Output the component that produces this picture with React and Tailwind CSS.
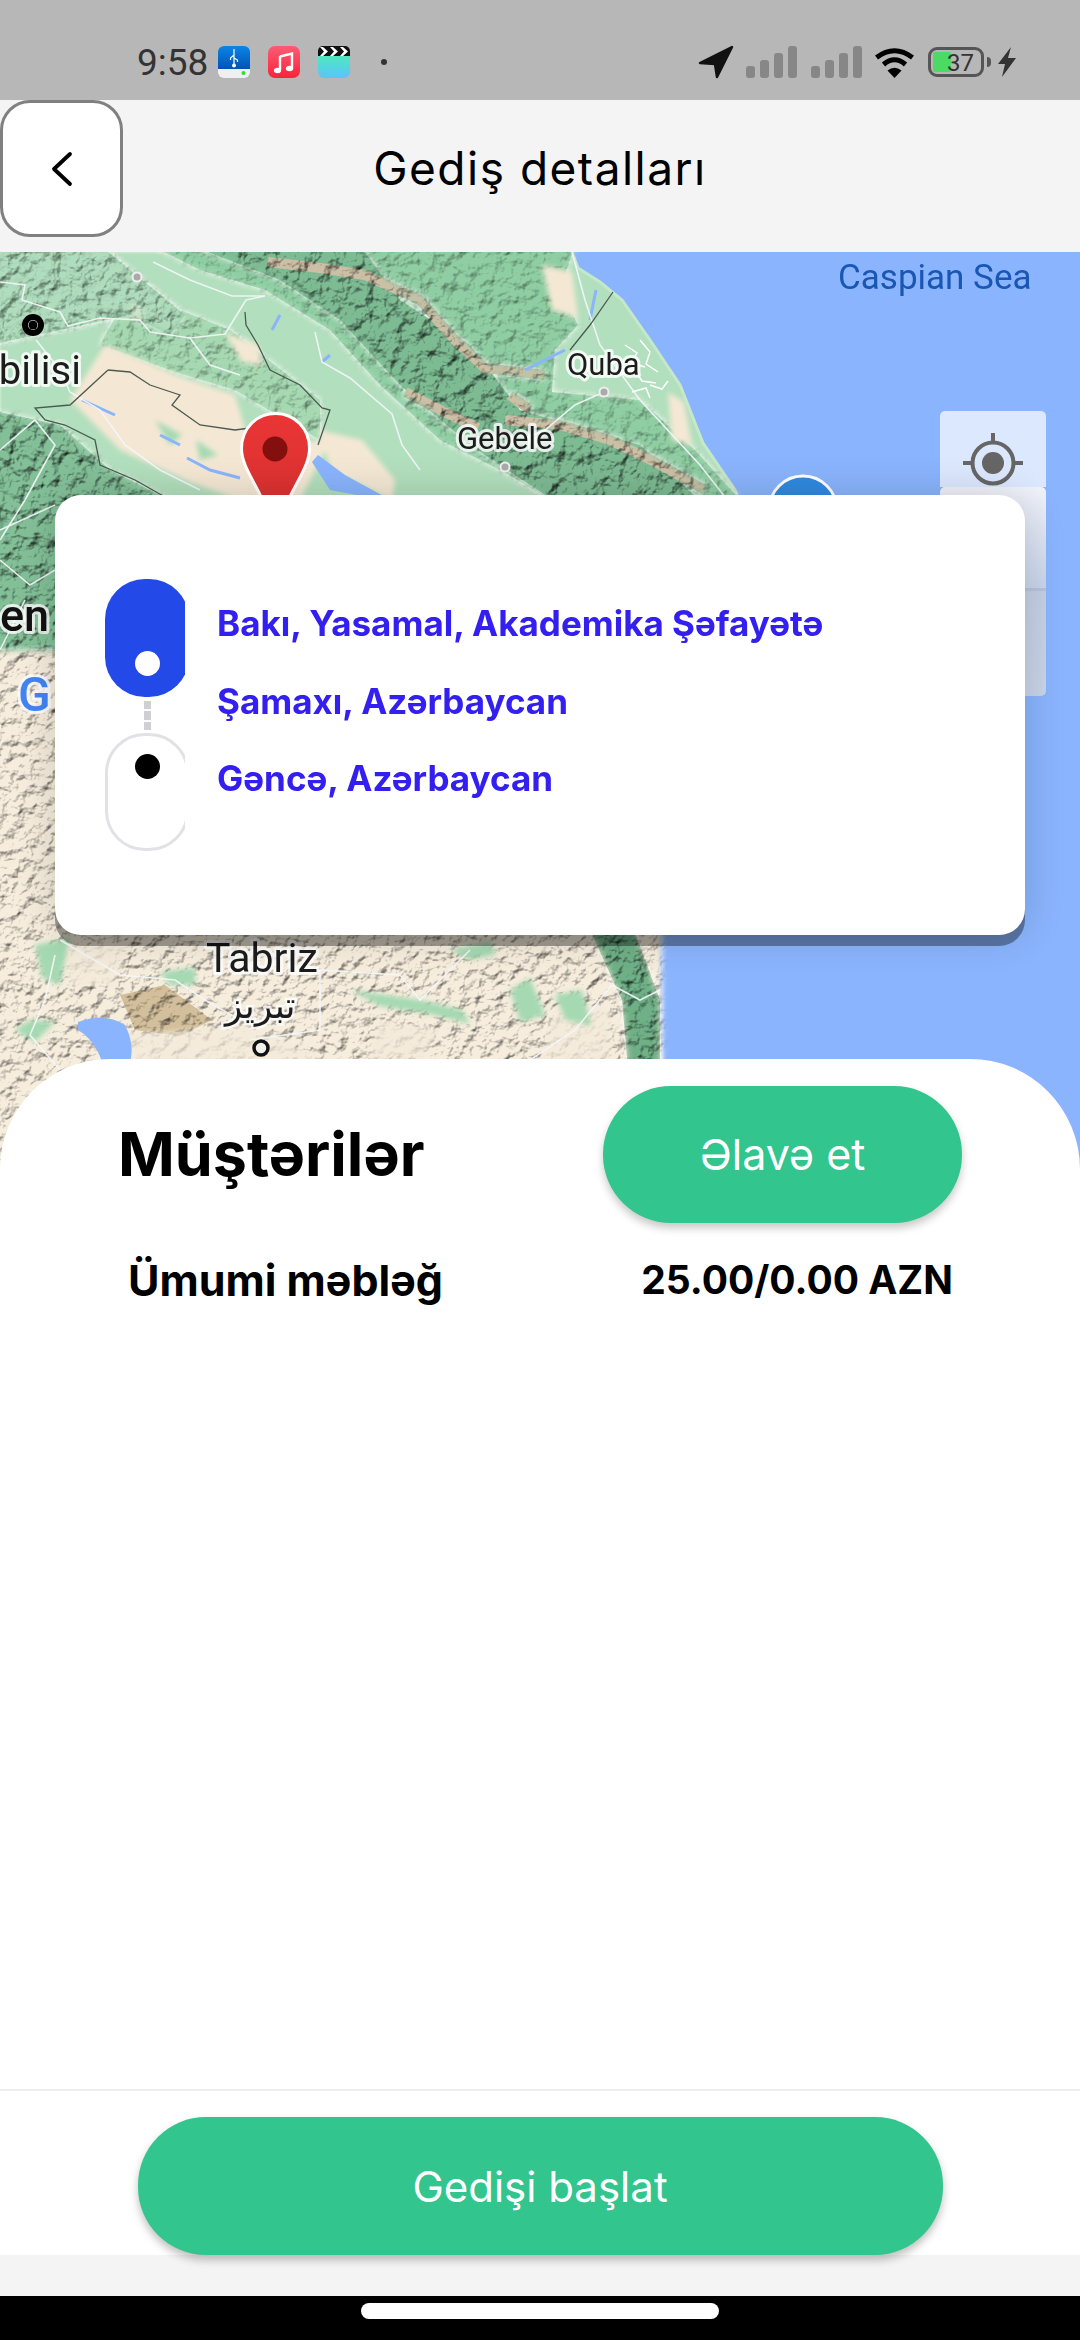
const pts = (poly) => poly.map((p) => p.join(",")).join(" ");

const LAND = [[0, 252], [572, 252], [578, 268], [600, 282], [622, 300], [650, 340], [680, 385], [703, 443], [735, 490], [760, 560], [700, 700], [670, 900], [655, 936], [660, 1060], [665, 1190], [0, 1190]];
const CAUCASUS = [[150, 245], [575, 245], [560, 290], [578, 325], [555, 350], [552, 392], [640, 400], [695, 450], [745, 505], [560, 505], [500, 470], [440, 440], [380, 385], [330, 330], [265, 290], [200, 270]];
const CAUCASUS_DARK = [[190, 245], [360, 245], [400, 300], [470, 345], [520, 410], [640, 445], [705, 505], [560, 505], [470, 445], [400, 385], [340, 320], [280, 280]];
const NORTH_WEST = [[-10, 245], [100, 245], [185, 315], [170, 335], [130, 315], [-10, 345]];
const FOOTHILL = [[100, 345], [130, 290], [230, 330], [320, 400], [320, 440], [235, 390], [175, 372]];
const LESSER = [[-10, 410], [60, 425], [110, 470], [180, 505], [60, 670], [-10, 670]];
const SOUTH = [[-10, 650], [62, 650], [62, 880], [662, 880], [662, 1200], [-10, 1200]];
const TALYSH = [[590, 930], [634, 930], [660, 1000], [660, 1070], [628, 1070], [622, 1000]];
const SAHAND = [[120, 995], [165, 985], [212, 1020], [180, 1036], [135, 1030]];

const BEIGE = [
  [[70, 400], [105, 345], [175, 375], [235, 395], [250, 445], [330, 440], [300, 500], [240, 500], [190, 482], [120, 450]],
  [[318, 430], [362, 440], [395, 480], [392, 500], [332, 472]],
  [[224, 332], [258, 345], [262, 366], [242, 362]],
  [[542, 265], [572, 272], [578, 318], [552, 310]],
  [[668, 392], [684, 402], [692, 445], [672, 440]],
  [[130, 300], [145, 312], [135, 322]],
];

const GREEN_PATCHES = [
  [[35, 945], [70, 938], [60, 985], [42, 978]],
  [[15, 1030], [35, 1042], [55, 1022], [30, 1020]],
  [[160, 972], [195, 968], [195, 985], [170, 985]],
  [[350, 990], [420, 1000], [462, 1010], [470, 1024], [430, 1014], [380, 1006]],
  [[510, 990], [530, 978], [545, 1015], [520, 1022]],
  [[555, 995], [582, 990], [592, 1026], [565, 1020]],
  [[450, 950], [490, 942], [496, 954], [470, 960]],
  [[155, 420], [182, 435], [170, 445]],
  [[196, 440], [218, 455], [200, 460]],
];

const SMOOTH_PATCHES = [
  [[100, 1036], [240, 1026], [330, 1060], [130, 1075]],
  [[62, 945], [125, 945], [115, 985], [70, 985]],
  [[380, 1020], [440, 1030], [420, 1060], [370, 1060]],
  [[560, 1000], [610, 1010], [610, 1062], [540, 1062]],
];

const ROADS = [
  [[0, 282], [25, 285], [22, 300], [60, 312], [68, 326], [100, 318], [140, 320], [150, 332], [190, 338], [225, 334], [246, 300], [265, 296]],
  [[153, 262], [190, 280], [232, 296], [265, 296]],
  [[315, 332], [322, 362], [350, 378], [392, 414], [402, 445], [420, 470]],
  [[190, 338], [195, 345], [210, 365], [240, 375]],
  [[36, 340], [60, 370], [70, 392], [100, 410], [125, 445], [160, 470], [200, 490]],
  [[0, 450], [35, 420], [55, 445], [25, 500], [0, 540]],
  [[0, 530], [55, 505]],
  [[572, 252], [585, 300], [600, 345], [640, 400], [700, 465], [725, 497]],
  [[604, 392], [575, 405], [545, 430], [520, 440]],
  [[0, 560], [30, 585], [55, 570]],
  [[25, 600], [5, 640], [0, 650]],
  [[60, 940], [120, 975], [175, 980], [205, 1000], [240, 1020]],
  [[55, 955], [45, 1000], [30, 1035], [60, 1070]],
  [[320, 970], [400, 975], [420, 1000], [470, 950]],
  [[612, 985], [575, 1030], [530, 1060]],
  [[612, 985], [640, 1000], [660, 990]],
  [[250, 1040], [320, 1030], [320, 970]],
];

const BORDERS = [
  [[245, 312], [246, 325], [258, 345], [270, 370], [300, 385], [322, 408], [330, 410], [318, 445]],
  [[108, 370], [130, 372], [150, 385], [180, 395], [172, 405], [200, 425], [235, 430], [250, 428]],
  [[108, 370], [70, 405], [35, 408], [45, 420], [65, 425], [95, 440], [100, 465], [135, 480], [165, 497]],
  [[613, 292], [590, 325], [570, 350]],
];

const CRESTS = [
  [[268, 262], [320, 268], [365, 275], [420, 300], [455, 340], [485, 368], [545, 375]],
  [[405, 392], [440, 410], [478, 428]],
  [[505, 420], [560, 425], [610, 440], [655, 462], [705, 490]],
  [[510, 395], [530, 410]],
];

const RIVERS = [
  [[187, 458], [210, 470], [240, 478]],
  [[82, 400], [115, 415]],
  [[160, 435], [180, 445]],
  [[272, 330], [280, 315]],
  [[330, 355], [322, 362]],
  [[525, 370], [545, 360], [565, 350]],
  [[590, 320], [596, 290]],
];

function Relief({ id, frequency, scale, seed, elevation = 58, contrast = 1.2 }) {
  const offset = (1 - contrast) / 2 + 0.1;
  return (
    <filter id={id} x="-5%" y="-5%" width="110%" height="110%" colorInterpolationFilters="sRGB">
      <feTurbulence type="fractalNoise" baseFrequency={frequency} numOctaves="4" seed={seed} result="noise" />
      <feDiffuseLighting in="noise" surfaceScale={scale} lightingColor="#ffffff" result="light">
        <feDistantLight azimuth="235" elevation={elevation} />
      </feDiffuseLighting>
      <feComponentTransfer in="light" result="lit">
        <feFuncR type="linear" slope={contrast} intercept={offset} />
        <feFuncG type="linear" slope={contrast} intercept={offset} />
        <feFuncB type="linear" slope={contrast} intercept={offset} />
      </feComponentTransfer>
      <feBlend in="SourceGraphic" in2="lit" mode="multiply" result="shaded" />
      <feGaussianBlur in="shaded" stdDeviation="0.600" result="smooth" />
      <feGaussianBlur in="SourceAlpha" stdDeviation="3" result="edge" />
      <feComposite in="smooth" in2="edge" operator="in" />
    </filter>
  );
}

function MapDrawing() {
  return (
    <svg className="absolute left-0 top-0 w-[1080px] h-[938px]" viewBox="0 252 1080 938">
      <defs>
        <filter id="soft" x="-10%" y="-10%" width="120%" height="120%">
          <feGaussianBlur stdDeviation="2.500" />
        </filter>
        <filter id="fine">
          <feGaussianBlur stdDeviation="0.500" />
        </filter>
        <Relief id="reliefStrong" frequency="0.07" scale="5" seed="4" contrast={1.2} />
        <Relief id="reliefMid" frequency="0.08" scale="2.500" seed="9" contrast={1.15} />
        <Relief id="reliefDesert" frequency="0.09" scale="3" seed="12" contrast={1.2} />
        <linearGradient id="pinFill" x1="0" y1="0" x2="0" y2="1">
          <stop offset="0" stopColor="#ea3535" />
          <stop offset="1" stopColor="#d63030" />
        </linearGradient>
      </defs>

      <rect x="0" y="252" width="1080" height="938" fill="#8ab4fd" />
      <polygon points={pts(LAND)} fill="#b2dfbd" stroke="#c5e8c9" strokeWidth="3" />

      <g filter="url(#reliefMid)">
        <polygon points={pts(FOOTHILL)} fill="#a6d9b2" />
        <polygon points={pts(CAUCASUS)} fill="#8fcea3" />
        <polygon points={pts(NORTH_WEST)} fill="#8fcea3" />
      </g>
      <g filter="url(#soft)">
        {BEIGE.map((p, i) => (
          <polygon key={i} points={pts(p)} fill="#f4e8d4" />
        ))}
      </g>
      <g filter="url(#reliefStrong)">
        <polygon points={pts(CAUCASUS_DARK)} fill="#7dbb93" />
        <polygon points={pts(NORTH_WEST)} fill="#a3d8b1" opacity="0.7" />
        <polygon points={pts(LESSER)} fill="#83c098" />
        {CRESTS.map((c, i) => (
          <polyline key={i} points={c.map((p) => p.join(",")).join(" ")} fill="none" stroke="#cdbfa6" strokeWidth="10" />
        ))}
      </g>

      <g filter="url(#reliefDesert)">
        <polygon points={pts(SOUTH)} fill="#f6eddd" />
        <polygon points={pts(SAHAND)} fill="#d3bf9b" />
      </g>
      <polygon points={pts(TALYSH)} fill="#6fb087" filter="url(#reliefStrong)" />
      <g filter="url(#soft)">
        {SMOOTH_PATCHES.map((p, i) => (
          <polygon key={i} points={pts(p)} fill="#f3ead9" opacity="0.75" />
        ))}
        {GREEN_PATCHES.map((p, i) => (
          <polygon key={i} points={pts(p)} fill="#a5d9b2" />
        ))}
      </g>

      <g filter="url(#fine)">
        {/* lakes */}
        <polygon points="312,462 330,490 368,497 385,497 345,475 318,455" fill="#8ab4fd" />
        <path d="M78 1022 Q105 1012 125 1025 Q135 1045 130 1062 L102 1062 Q95 1040 78 1030 Z" fill="#8ab4fd" />
        {RIVERS.map((r, i) => (
          <polyline key={i} points={r.map((p) => p.join(",")).join(" ")} fill="none" stroke="#8ab4fd" strokeWidth="3" />
        ))}
        {ROADS.map((r, i) => (
          <polyline key={i} points={r.map((p) => p.join(",")).join(" ")} fill="none" stroke="#f4f6fa" strokeWidth="1.600" opacity="0.9" />
        ))}
        {BORDERS.map((r, i) => (
          <polyline key={i} points={r.map((p) => p.join(",")).join(" ")} fill="none" stroke="#4c5a52" strokeWidth="1.300" />
        ))}
        {/* Quba street mesh */}
        <path d="M625 345l12 8l-6 10l14 4M640 340l10 12l-4 12l12 8M620 375l14-6l8 12l14 2M650 385l12 4l6-8M632 392l14-4l4 10" fill="none" stroke="#ffffff" strokeWidth="1.500" />
      </g>

      {/* place dots */}
      <circle cx="33" cy="325" r="8" fill="#fff" stroke="#000" strokeWidth="6" />
      <circle cx="33" cy="325" r="4.500" fill="#000" />
      <circle cx="137" cy="277" r="4.500" fill="#aaa" stroke="#eee" strokeWidth="2" />
      <circle cx="604" cy="392" r="4.500" fill="#aaa" stroke="#eee" strokeWidth="2" />
      <circle cx="505" cy="467" r="4.500" fill="#aaa" stroke="#eee" strokeWidth="2" />
      <circle cx="261" cy="1048" r="7" fill="#f2f0ea" stroke="#111" strokeWidth="3.500" />

      {/* labels */}
      <g className="font-['Roboto',sans-serif]" stroke="#ffffff" strokeOpacity="0.8" strokeWidth="6" paintOrder="stroke" strokeLinejoin="round">
        <text x="-25" y="384" fontSize="40" fill="#1c1c1c">Tbilisi</text>
        <text x="567" y="375" fontSize="31" fill="#1c1c1c">Quba</text>
        <text x="457" y="449" fontSize="31" fill="#1c1c1c">Gebele</text>
        <text x="206" y="972" fontSize="41" fill="#1c1c1c">Tabriz</text>
        <text x="0" y="631" fontSize="45" fontWeight="500" fill="#111">en</text>
        <text x="18" y="711" fontSize="48" fontWeight="500" fill="#4285f4">G</text>
      </g>
      <text x="225" y="1018" fontSize="36" fill="#1c1c1c" stroke="#fff" strokeOpacity="0.8" strokeWidth="5" paintOrder="stroke" className="font-['DejaVu_Sans',sans-serif]">تبریز</text>
      <text x="838" y="289" fontSize="35" fill="#1a56b4" className="font-['Roboto',sans-serif]">Caspian Sea</text>

      {/* red pin */}
      <path d="M275.500 413.500c-19 0-34 15-34 35 0 22 22 42 34 85 12-43 34-63 34-85 0-20-15-35-34-35z" fill="url(#pinFill)" stroke="#ffffff" strokeWidth="3" />
      <circle cx="275" cy="449" r="12.500" fill="#83100f" />

      {/* blue marker */}
      <circle cx="803" cy="510" r="34" fill="#2f8ae0" stroke="#ffffff" strokeWidth="3" />
    </svg>
  );
}

function UsbIcon() {
  return (
    <svg className="w-[32px] h-[32px]" viewBox="0 0 32 32">
      <defs>
        <linearGradient id="usbTop" x1="0" y1="0" x2="0" y2="1">
          <stop offset="0" stopColor="#0a86e6" />
          <stop offset="1" stopColor="#0250b4" />
        </linearGradient>
      </defs>
      <path d="M6 0h20a6 6 0 0 1 6 6v18H0V6a6 6 0 0 1 6-6z" fill="url(#usbTop)" />
      <path d="M0 23h32v3a6 6 0 0 1-6 6H6a6 6 0 0 1-6-6z" fill="#eef0f3" />
      <path d="M16 3v17M16 9l-3.500 3v2M16 12l3.500 2v2" stroke="#fff" strokeWidth="1.200" fill="none" />
      <circle cx="16" cy="19.500" r="2" fill="#fff" />
      <circle cx="25.500" cy="27" r="2" fill="#2ee02e" />
    </svg>
  );
}

function MusicIcon() {
  return (
    <svg className="w-[32px] h-[32px]" viewBox="0 0 32 32">
      <defs>
        <linearGradient id="musicBg" x1="0" y1="0" x2="0" y2="1">
          <stop offset="0" stopColor="#fb5c74" />
          <stop offset="1" stopColor="#fa233b" />
        </linearGradient>
      </defs>
      <rect width="32" height="32" rx="7" fill="url(#musicBg)" />
      <path d="M12 10.500l12-3v15" fill="none" stroke="#fff" strokeWidth="2.400" />
      <path d="M12 10v14" fill="none" stroke="#fff" strokeWidth="2.400" />
      <ellipse cx="9.500" cy="24.500" rx="3.600" ry="2.800" fill="#fff" />
      <ellipse cx="21.500" cy="22.500" rx="3.600" ry="2.800" fill="#fff" />
    </svg>
  );
}

function ClipsIcon() {
  return (
    <svg className="w-[32px] h-[32px]" viewBox="0 0 32 32">
      <defs>
        <linearGradient id="clipsBg" x1="0" y1="0" x2="0" y2="1">
          <stop offset="0" stopColor="#4ee8c0" />
          <stop offset="1" stopColor="#5ac4fb" />
        </linearGradient>
      </defs>
      <path d="M0 10h32v16a6 6 0 0 1-6 6H6a6 6 0 0 1-6-6z" fill="url(#clipsBg)" />
      <path d="M5 0h22a5 5 0 0 1 5 5v5H0V5a5 5 0 0 1 5-5z" fill="#111" />
      <path d="M2 1h3l5 4.500L5 10H2l4-4.500zM12 1h3l5 4.500L15 10h-3l4-4.500zM22 1h3l5 4.500L25 10h-3l4-4.500z" fill="#fff" />
    </svg>
  );
}

function SignalBars() {
  return (
    <div className="flex items-end gap-[5px] h-[32px] opacity-90">
      <div className="w-[9px] h-[12px] rounded-[3px] bg-[#828282]" />
      <div className="w-[9px] h-[18px] rounded-[3px] bg-[#828282]" />
      <div className="w-[9px] h-[25px] rounded-[3px] bg-[#828282]" />
      <div className="w-[9px] h-[32px] rounded-[3px] bg-[#828282]" />
    </div>
  );
}

function StatusBar() {
  return (
    <div className="h-[100px] bg-[#b7b7b7] flex items-center pt-[24px] pl-[137px] pr-[63px] shrink-0">
      <span className="text-[37px] leading-none text-[#333333] font-['Roboto',sans-serif] w-[81px]">9:58</span>
      <div className="flex items-center gap-[18px]">
        <UsbIcon />
        <MusicIcon />
        <ClipsIcon />
      </div>
      <div className="ml-[31px] w-[6px] h-[6px] rounded-full bg-[#333333]" />
      <div className="ml-auto flex items-center">
        <svg className="w-[36px] h-[34px]" viewBox="0 0 36 34">
          <path d="M34 2L2 18l15 1 2 13z" fill="#111111" stroke="#111111" strokeWidth="2.500" strokeLinejoin="round" />
        </svg>
        <div className="ml-[12px]">
          <SignalBars />
        </div>
        <div className="ml-[14px]">
          <SignalBars />
        </div>
        <svg className="ml-[12px] w-[41px] h-[31px]" viewBox="0 0 41 31">
          <path d="M2.500 10.500Q20.500-3 38.500 10.500" fill="none" stroke="#000" strokeWidth="5" />
          <path d="M9.500 17.500Q20.500 8 31.500 17.500" fill="none" stroke="#000" strokeWidth="5" />
          <path d="M13.500 23.500Q20.500 18 27.500 23.500L20.500 31z" fill="#000" />
        </svg>
        <div className="ml-[13px] relative w-[56px] h-[30px] rounded-[9px] border-[3px] border-[#555555] p-[2px] font-['Roboto',sans-serif]">
          <div className="w-[18px] h-full rounded-[2px] bg-[#4cd964]" />
          <span className="absolute left-[16px] top-[1px] text-[24px] leading-[24px] text-[#333333]">37</span>
        </div>
        <div className="ml-[3px] w-[4px] h-[10px] rounded-r-full bg-[#555555]" />
        <svg className="ml-[6px] w-[20px] h-[30px]" viewBox="0 0 20 30">
          <path d="M14 0L1 17h7l-3 13L19 11h-8z" fill="#333333" />
        </svg>
      </div>
    </div>
  );
}

function Header() {
  return (
    <div className="h-[152px] bg-[#f4f4f4] grid grid-cols-[123px_1fr_123px] shrink-0">
      <button className="h-[137px] bg-white border-[3px] border-[#808080] rounded-[30px] flex items-center pl-[47px]">
        <svg className="w-[24px] h-[36px]" viewBox="0 0 24 36">
          <path d="M20 3L4 18l16 15" fill="none" stroke="#000" strokeWidth="3.800" strokeLinecap="round" strokeLinejoin="round" />
        </svg>
      </button>
      <div className="h-[137px] flex items-center justify-center text-[46px] text-black font-['Inter',sans-serif] tracking-[1.5px]">
        Gediş detalları
      </div>
    </div>
  );
}

function RouteCard() {
  return (
    <div className="absolute left-[55px] top-[243px] w-[970px] h-[440px] bg-white rounded-[26px] shadow-[0_11px_0_rgba(0,0,0,0.36),0_0_40px_rgba(0,0,0,0.16)] flex pl-[50px]">
      <div className="mt-[84px] w-[80px] h-[274px] overflow-hidden flex flex-col items-start shrink-0">
        <div className="w-[84px] h-[118px] rounded-[40px] bg-[#2349e8] flex flex-col items-center justify-end pb-[21px] shrink-0">
          <div className="w-[25px] h-[25px] rounded-full bg-white" />
        </div>
        <div className="ml-[39px] mt-[4px] flex flex-col gap-[2px]">
          <div className="w-[7px] h-[8px] bg-[#d0d0d4]" />
          <div className="w-[7px] h-[9px] bg-[#d0d0d4]" />
          <div className="w-[7px] h-[8px] bg-[#d0d0d4]" />
        </div>
        <div className="mt-[3px] w-[84px] h-[118px] rounded-[40px] border-[3px] border-[#e2e2e6] flex flex-col items-center pt-[18px] shrink-0">
          <div className="w-[25px] h-[25px] rounded-full bg-black" />
        </div>
      </div>
      <div className="ml-[32px] mt-[89px] font-['Inter',sans-serif] font-bold text-[35px] text-[#3320f0]">
        <div className="h-[78px] flex items-center whitespace-nowrap">Bakı, Yasamal, Akademika Şəfayətə</div>
        <div className="h-[78px] flex items-center whitespace-nowrap">Şamaxı, Azərbaycan</div>
        <div className="h-[77px] flex items-center whitespace-nowrap">Gəncə, Azərbaycan</div>
      </div>
    </div>
  );
}

function MapControls() {
  return (
    <div className="absolute left-[940px] top-[159px] w-[106px] flex flex-col">
      <div className="h-[76px] bg-[#dce8fe] rounded-t-[5px] flex justify-center pt-[22px]">
        <svg className="w-[60px] h-[60px] overflow-visible" viewBox="0 0 60 60">
          <circle cx="30" cy="30" r="20.500" fill="none" stroke="#666666" strokeWidth="4" />
          <circle cx="30" cy="30" r="11" fill="#666666" />
          <path d="M30 0v10M0 30h10M50 30h10" stroke="#666666" strokeWidth="4" />
        </svg>
      </div>
      <div className="h-[104px] bg-linear-to-b from-[#f1f3fb] to-[#c7d4ea] border-b-[3px] border-[#b6c3dc] rounded-t-[5px]" />
      <div className="h-[105px] bg-linear-to-b from-[#c3cfe5] to-[#c9d4e8] rounded-b-[5px]" />
    </div>
  );
}

export default function App() {
  return (
    <div className="w-[1080px] h-[2340px] flex flex-col bg-[#f4f4f4] overflow-hidden font-['Inter',sans-serif]">
      <StatusBar />
      <Header />

      <div className="relative h-[807px] shrink-0">
        <MapDrawing />
        <MapControls />
        <RouteCard />
      </div>

      {/* bottom sheet */}
      <div className="relative h-[1196px] shrink-0 bg-white rounded-t-[110px] flex flex-col">
        <div className="pt-[27px] pl-[118px] pr-[118px] flex items-center justify-between">
          <h1 className="text-[61px] font-bold text-black">Müştərilər</h1>
          <button className="w-[359px] h-[137px] rounded-[68px] bg-[#32c58d] text-white text-[43px] shadow-[0_5px_9px_rgba(0,0,0,0.22)]">
            Əlavə et
          </button>
        </div>
        <div className="mt-[27px] h-[60px] pl-[128px] pr-[127px] flex items-center justify-between font-bold text-black">
          <span className="text-[43px]">Ümumi məbləğ</span>
          <span className="text-[39px]">25.00/0.00 AZN</span>
        </div>
        <div className="mt-auto h-[166px] border-t-2 border-[#eeeeee] pt-[26px] flex justify-center">
          <button className="w-[805px] h-[138px] rounded-[68px] bg-[#32c58d] text-white text-[42px] shadow-[0_5px_9px_rgba(0,0,0,0.25)]">
            Gedişi başlat
          </button>
        </div>
      </div>

      <div className="h-[41px] bg-[#f4f4f4] shrink-0" />
      <div className="h-[44px] bg-black shrink-0 flex justify-center pt-[7px]">
        <div className="w-[358px] h-[16px] rounded-full bg-white" />
      </div>
    </div>
  );
}
